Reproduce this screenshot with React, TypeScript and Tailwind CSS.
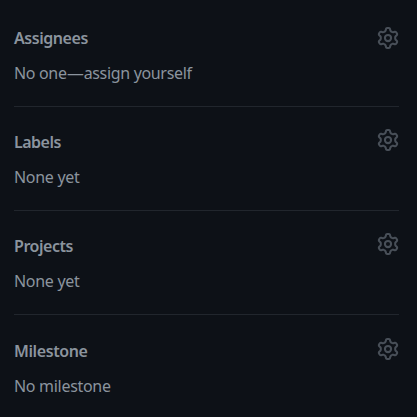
import type { ReactNode } from 'react';

type Row = { title: string; text: ReactNode; pad: string; gear: string; spacing: string; titleSpacing: string };

const rows: Row[] = [
  {
    title: 'Assignees',
    text: (
      <>
        No one<span className="inline-block w-[17px] origin-left scale-x-[1.05] tracking-normal">—</span>assign yourself
      </>
    ),
    pad: 'pt-[24px]',
    gear: 'mb-0',
    spacing: 'tracking-[-0.33px]',
    titleSpacing: 'tracking-[-0.45px]',
  },
  { title: 'Labels', text: 'None yet', pad: 'pt-[24px]', gear: 'mb-[4px]', spacing: 'tracking-[-0.3px]', titleSpacing: 'tracking-[-0.5px]' },
  { title: 'Projects', text: 'None yet', pad: 'pt-[24px]', gear: 'mb-[4px]', spacing: 'tracking-[-0.3px]', titleSpacing: 'tracking-[-0.45px]' },
  { title: 'Milestone', text: 'No milestone', pad: 'pt-[25px]', gear: 'mb-[4px]', spacing: 'tracking-[-0.3px]', titleSpacing: 'tracking-[-0.4px]' },
];

function Gear({ className }: { className: string }) {
  return (
    <svg width="22" height="22" viewBox="0 0 16 16" fill="#484f58" className={`shrink-0 ${className}`}>
      <path d="M8 0a8.2 8.2 0 0 1 .701.031C9.444.095 9.99.645 10.16 1.29l.288 1.107c.018.066.079.158.212.224.231.114.454.243.668.386.123.082.233.09.299.071l1.103-.303c.644-.176 1.392.021 1.82.63.27.385.506.792.704 1.218.315.675.111 1.422-.364 1.891l-.814.806c-.049.048-.098.147-.088.294.016.257.016.515 0 .772-.01.147.038.246.088.294l.814.806c.475.469.679 1.216.364 1.891a7.977 7.977 0 0 1-.704 1.217c-.428.61-1.176.807-1.82.63l-1.102-.302c-.067-.019-.177-.011-.3.071a5.909 5.909 0 0 1-.668.386c-.133.066-.194.158-.211.224l-.29 1.106c-.168.646-.715 1.196-1.458 1.26a8.006 8.006 0 0 1-1.402 0c-.743-.064-1.289-.614-1.458-1.26l-.289-1.106c-.018-.066-.079-.158-.212-.224a5.738 5.738 0 0 1-.668-.386c-.123-.082-.233-.09-.299-.071l-1.103.303c-.644.176-1.392-.021-1.82-.63a8.12 8.12 0 0 1-.704-1.218c-.315-.675-.111-1.422.363-1.891l.815-.806c.05-.048.098-.147.088-.294a6.214 6.214 0 0 1 0-.772c.01-.147-.038-.246-.088-.294l-.815-.806C.635 6.045.431 5.298.746 4.623a7.92 7.92 0 0 1 .704-1.217c.428-.61 1.176-.807 1.82-.63l1.102.302c.067.019.177.011.3-.071.214-.143.437-.272.668-.386.133-.066.194-.158.211-.224l.29-1.106C6.009.645 6.556.095 7.299.03 7.53.01 7.764 0 8 0Zm-.571 1.525c-.036.003-.108.036-.137.146l-.289 1.105c-.147.561-.549.967-.998 1.189-.173.086-.34.183-.5.29-.417.278-.97.423-1.529.27l-1.103-.303c-.109-.03-.175.016-.195.045-.22.312-.412.644-.573.99-.014.031-.021.11.059.19l.815.806c.411.406.562.957.53 1.456a4.709 4.709 0 0 0 0 .582c.032.499-.119 1.05-.53 1.456l-.815.806c-.081.08-.073.159-.059.19.162.346.353.677.573.989.02.03.085.076.195.046l1.102-.303c.56-.153 1.113-.008 1.53.27.161.107.328.204.501.29.447.222.85.629.997 1.189l.289 1.105c.029.109.101.143.137.146a6.6 6.6 0 0 0 1.142 0c.036-.003.108-.036.137-.146l.289-1.105c.147-.561.549-.967.998-1.189.173-.086.34-.183.5-.29.417-.278.97-.423 1.529-.27l1.103.303c.109.029.175-.016.195-.045.22-.313.411-.644.573-.99.014-.031.021-.11-.059-.19l-.815-.806c-.411-.406-.562-.957-.53-1.456a4.709 4.709 0 0 0 0-.582c-.032-.499.119-1.05.53-1.456l.815-.806c.081-.08.073-.159.059-.19a6.464 6.464 0 0 0-.573-.989c-.02-.03-.085-.076-.195-.046l-1.102.303c-.56.153-1.113.008-1.53-.27a4.44 4.44 0 0 0-.501-.29c-.447-.222-.85-.629-.997-1.189l-.289-1.105c-.029-.11-.101-.143-.137-.146a6.6 6.6 0 0 0-1.142 0ZM11 8a3 3 0 1 1-6 0 3 3 0 0 1 6 0ZM9.5 8a1.5 1.5 0 1 0-3.001.001A1.5 1.5 0 0 0 9.5 8Z" />
    </svg>
  );
}

export default function App() {
  return (
    <div className="h-[417px] w-[417px] overflow-hidden bg-[#0d1117] pt-[3px] pr-[18px] pl-[14px] font-['Noto_Sans',sans-serif] text-[#8b949e]">
      {rows.map((row) => (
        <section key={row.title} className={`h-[104px] border-b border-[#21262d] last:border-b-0 ${row.pad}`}>
          <div className="flex h-[22px] items-center justify-between">
            <h2 className={`text-[16px] font-semibold whitespace-nowrap ${row.titleSpacing}`}>{row.title}</h2>
            <Gear className={row.gear} />
          </div>
          <p className={`mt-[12px] text-[16px] leading-[24px] whitespace-nowrap ${row.spacing}`}>{row.text}</p>
        </section>
      ))}
    </div>
  );
}
